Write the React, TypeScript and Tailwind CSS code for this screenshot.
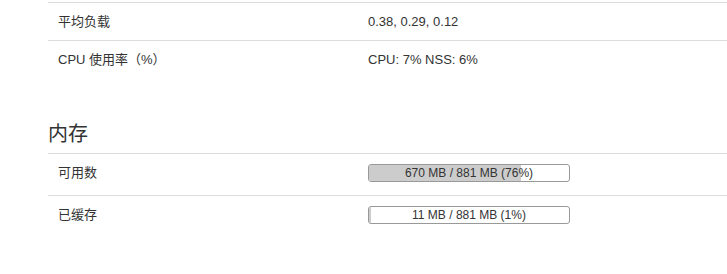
import React from "react";

const font = { fontFamily: '"Liberation Sans", "Noto Sans CJK SC", sans-serif' };

function Bar({ value, total, pct }: { value: string; total: string; pct: number }) {
  return (
    <div className="relative h-[18px] w-[202px] overflow-hidden rounded-[3px] border border-[#999] bg-white">
      <div className="absolute inset-y-0 left-0 bg-[#ccc]" style={{ width: `${pct}%` }} />
      <div className="relative text-center text-[12px] leading-[16px] text-[#333]">
        {value} / {total} ({pct}%)
      </div>
    </div>
  );
}

export default function App() {
  return (
    <div className="h-[274px] w-[727px] bg-white pl-[48px] pt-[2px] text-[#333]" style={font}>
      <div className="flex h-[38px] border-t border-[#ddd] pt-[10px] text-[13px] leading-[18px]">
        <div className="w-[320px] pl-[10px]">平均负载</div>
        <div>0.38, 0.29, 0.12</div>
      </div>
      <div className="flex h-[38px] border-t border-[#ddd] pt-[10px] text-[13px] leading-[18px]">
        <div className="w-[320px] pl-[10px]">CPU 使用率（%）</div>
        <div>CPU: 7% NSS: 6%</div>
      </div>
      <h2 className="mt-[45px] pb-[8px] text-[20px] leading-[22px] font-normal text-[#333]">内存</h2>
      <div className="flex h-[42px] border-t border-[#ddd] pt-[10px] text-[13px] leading-[18px]">
        <div className="w-[320px] pl-[10px]">可用数</div>
        <Bar value="670 MB" total="881 MB" pct={76} />
      </div>
      <div className="flex h-[42px] border-t border-[#ddd] pt-[10px] text-[13px] leading-[18px]">
        <div className="w-[320px] pl-[10px]">已缓存</div>
        <Bar value="11 MB" total="881 MB" pct={1} />
      </div>
    </div>
  );
}
